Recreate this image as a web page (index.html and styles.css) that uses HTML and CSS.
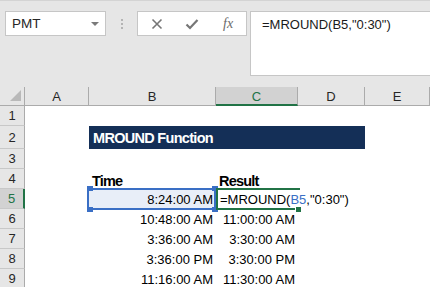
FILE: index.html
```html
<!DOCTYPE html>
<html lang="en">
<head>
    <meta charset="UTF-8">
    <title>MROUND Function</title>
    <link rel="stylesheet" href="styles.css">
</head>
<body>
    <!-- Formula bar -->
    <header class="bar">
        <div class="namebox">
            <span>PMT</span>
            <svg class="caret" width="8" height="5" viewBox="0 0 8 5"><path d="M0 0h8L4 4z" fill="#7a7a7a"/></svg>
        </div>
        <div class="grip"><i></i><i></i><i></i></div>
        <div class="fnbox">
            <svg width="12" height="12" viewBox="0 0 12 12"><path d="M1.5 1.5l9 9M10.5 1.5l-9 9" stroke="#767676" stroke-width="1.6"/></svg>
            <svg width="14" height="12" viewBox="0 0 14 12"><path d="M1.5 6.5l3.5 3.5 7.5-8" stroke="#767676" stroke-width="2.2" fill="none"/></svg>
            <span class="fx">fx</span>
        </div>
        <div class="formula">=MROUND(B5,"0:30")</div>
    </header>

    <!-- Sheet -->
    <main class="sheet">
        <div class="corner"><span class="tri"></span></div>
        <div class="colh">A</div>
        <div class="colh">B</div>
        <div class="colh active">C</div>
        <div class="colh">D</div>
        <div class="colh">E</div>

        <div class="rowh">1</div>
        <div class="cell"></div><div class="cell"></div><div class="cell"></div><div class="cell"></div><div class="cell"></div>

        <div class="rowh">2</div>
        <div class="cell"></div>
        <div class="cell title">MROUND Function</div>
        <div class="cell"></div>

        <div class="rowh">3</div>
        <div class="cell"></div><div class="cell"></div><div class="cell"></div><div class="cell"></div><div class="cell"></div>

        <div class="rowh">4</div>
        <div class="cell"></div>
        <div class="cell head">Time</div>
        <div class="cell head">Result</div>
        <div class="cell"></div><div class="cell"></div>

        <div class="rowh active">5</div>
        <div class="cell"></div>
        <div class="cell num ref">
            8:24:00 AM
            <span class="refbox"></span>
            <span class="hd tl"></span><span class="hd tr"></span><span class="hd bl"></span><span class="hd br"></span>
        </div>
        <div class="cell edit">
            <span>=MROUND(<b>B5</b>,"0:30")</span><span class="cursor"></span>
            <span class="editbox"></span>
            <span class="fill"></span>
        </div>
        <div class="cell"></div><div class="cell"></div>

        <div class="rowh">6</div>
        <div class="cell"></div>
        <div class="cell num">10:48:00 AM</div>
        <div class="cell num">11:00:00 AM</div>
        <div class="cell"></div><div class="cell"></div>

        <div class="rowh">7</div>
        <div class="cell"></div>
        <div class="cell num">3:36:00 AM</div>
        <div class="cell num">3:30:00 AM</div>
        <div class="cell"></div><div class="cell"></div>

        <div class="rowh">8</div>
        <div class="cell"></div>
        <div class="cell num">3:36:00 PM</div>
        <div class="cell num">3:30:00 PM</div>
        <div class="cell"></div><div class="cell"></div>

        <div class="rowh">9</div>
        <div class="cell"></div>
        <div class="cell num">11:16:00 AM</div>
        <div class="cell num">11:30:00 AM</div>
        <div class="cell"></div><div class="cell"></div>
    </main>
</body>
</html>
```

FILE: styles.css
```css
/* Global */
* {
    margin: 0;
    padding: 0;
    box-sizing: border-box;
}

body {
    width: 430px;
    height: 287px;
    overflow: hidden;
    background: #fff;
    font-family: "Liberation Sans", Arial, sans-serif;
    font-size: 13px;
    color: #000;
}

/* Formula bar */
.bar {
    height: 87px;
    background: #e6e6e6;
    border-top: 1px solid #d4d4d4;
    display: flex;
    align-items: flex-start;
    padding: 10px 0 0 5px;
}

.namebox {
    width: 101px;
    height: 25px;
    background: #fff;
    border: 1px solid #c6c6c6;
    display: flex;
    align-items: center;
    justify-content: space-between;
    padding: 0 6px 0 6px;
    color: #262626;
    font-size: 13.5px;
}

.caret {
    margin-top: 1px;
}

.grip {
    width: 31px;
    height: 25px;
    display: flex;
    flex-direction: column;
    align-items: center;
    justify-content: center;
    gap: 2px;
}

.grip i {
    width: 2px;
    height: 2px;
    background: #b4b4b4;
}

.fnbox {
    width: 110px;
    height: 25px;
    background: #fff;
    border: 1px solid #c6c6c6;
    display: flex;
    align-items: center;
    padding-left: 13px;
    gap: 22px;
}

.fx {
    font-family: "Liberation Serif", "Times New Roman", serif;
    font-style: italic;
    font-size: 14px;
    color: #6a6a6a;
    margin-left: 2px;
}

.formula {
    flex: 1;
    height: 65px;
    margin-left: 3px;
    background: #fff;
    border: 1px solid #c6c6c6;
    border-right: none;
    padding: 5px 0 0 11px;
    color: #1a1a1a;
}

/* Sheet grid */
.sheet {
    display: grid;
    grid-template-columns: 25px 64px 127px 82px 67px 65px;
    grid-template-rows: 19px 20px 23px repeat(7, 20px);
}

.corner,
.colh,
.rowh {
    background: #e6e6e6;
    color: #262626;
    display: flex;
    align-items: center;
    justify-content: center;
}

.corner {
    border-right: 1px solid #ababab;
    border-bottom: 1px solid #ababab;
    position: relative;
}

.tri {
    position: absolute;
    right: 3px;
    bottom: 4px;
    width: 0;
    height: 0;
    border-left: 11px solid transparent;
    border-bottom: 11px solid #b9b9b9;
}

.colh {
    border-right: 1px solid #ababab;
    border-bottom: 1px solid #ababab;
    padding-top: 1px;
}

.colh.active {
    background: #d2d2d2;
    color: #217346;
    border-bottom: 2px solid #217346;
}

.rowh {
    border-right: 1px solid #ababab;
    border-bottom: 1px solid #c8c8c8;
}

.rowh.active {
    background: #d2d2d2;
    color: #217346;
    border-right: 2px solid #217346;
}

.cell {
    position: relative;
    white-space: nowrap;
    display: flex;
    align-items: center;
    padding: 0 3px;
}

.title {
    grid-column: span 3;
    background: #142f57;
    color: #fff;
    font-weight: bold;
    font-size: 14.5px;
    letter-spacing: -0.7px;
    padding-left: 4px;
    padding-top: 1px;
}

.head {
    font-weight: bold;
    font-size: 14.5px;
    letter-spacing: -0.8px;
    padding-top: 4px;
}

.num {
    justify-content: flex-end;
}

/* B5 reference highlight */
.ref {
    background: #e8eef8;
}

.refbox {
    position: absolute;
    top: -1px;
    left: -2px;
    right: 0;
    bottom: -1px;
    border: 2px solid #3a6fc5;
}

.hd {
    position: absolute;
    width: 6px;
    height: 5px;
    background: #3a6fc5;
}

.hd.tl { top: -3px; left: -2px; }
.hd.tr { top: -3px; right: -2px; }
.hd.bl { bottom: -3px; left: -2px; }
.hd.br { bottom: -3px; right: -2px; }

/* C5 edit cell */
.edit {
    overflow: visible;
    padding-left: 4px;
    z-index: 1;
}

.edit b {
    font-weight: normal;
    color: #3a6fc5;
}

.cursor {
    display: inline-block;
    width: 2px;
    height: 17px;
    background: #000;
    margin-left: 2px;
}

.editbox {
    position: absolute;
    top: -1px;
    left: 0;
    width: 84px;
    bottom: -1px;
    border-top: 2px solid #217346;
    border-left: 2px solid #217346;
}

.editbox::after {
    content: "";
    position: absolute;
    left: -2px;
    bottom: 0;
    width: 79px;
    height: 2px;
    background: #217346;
}

.fill {
    position: absolute;
    left: 80px;
    bottom: -3px;
    width: 5px;
    height: 5px;
    background: #217346;
}
```
